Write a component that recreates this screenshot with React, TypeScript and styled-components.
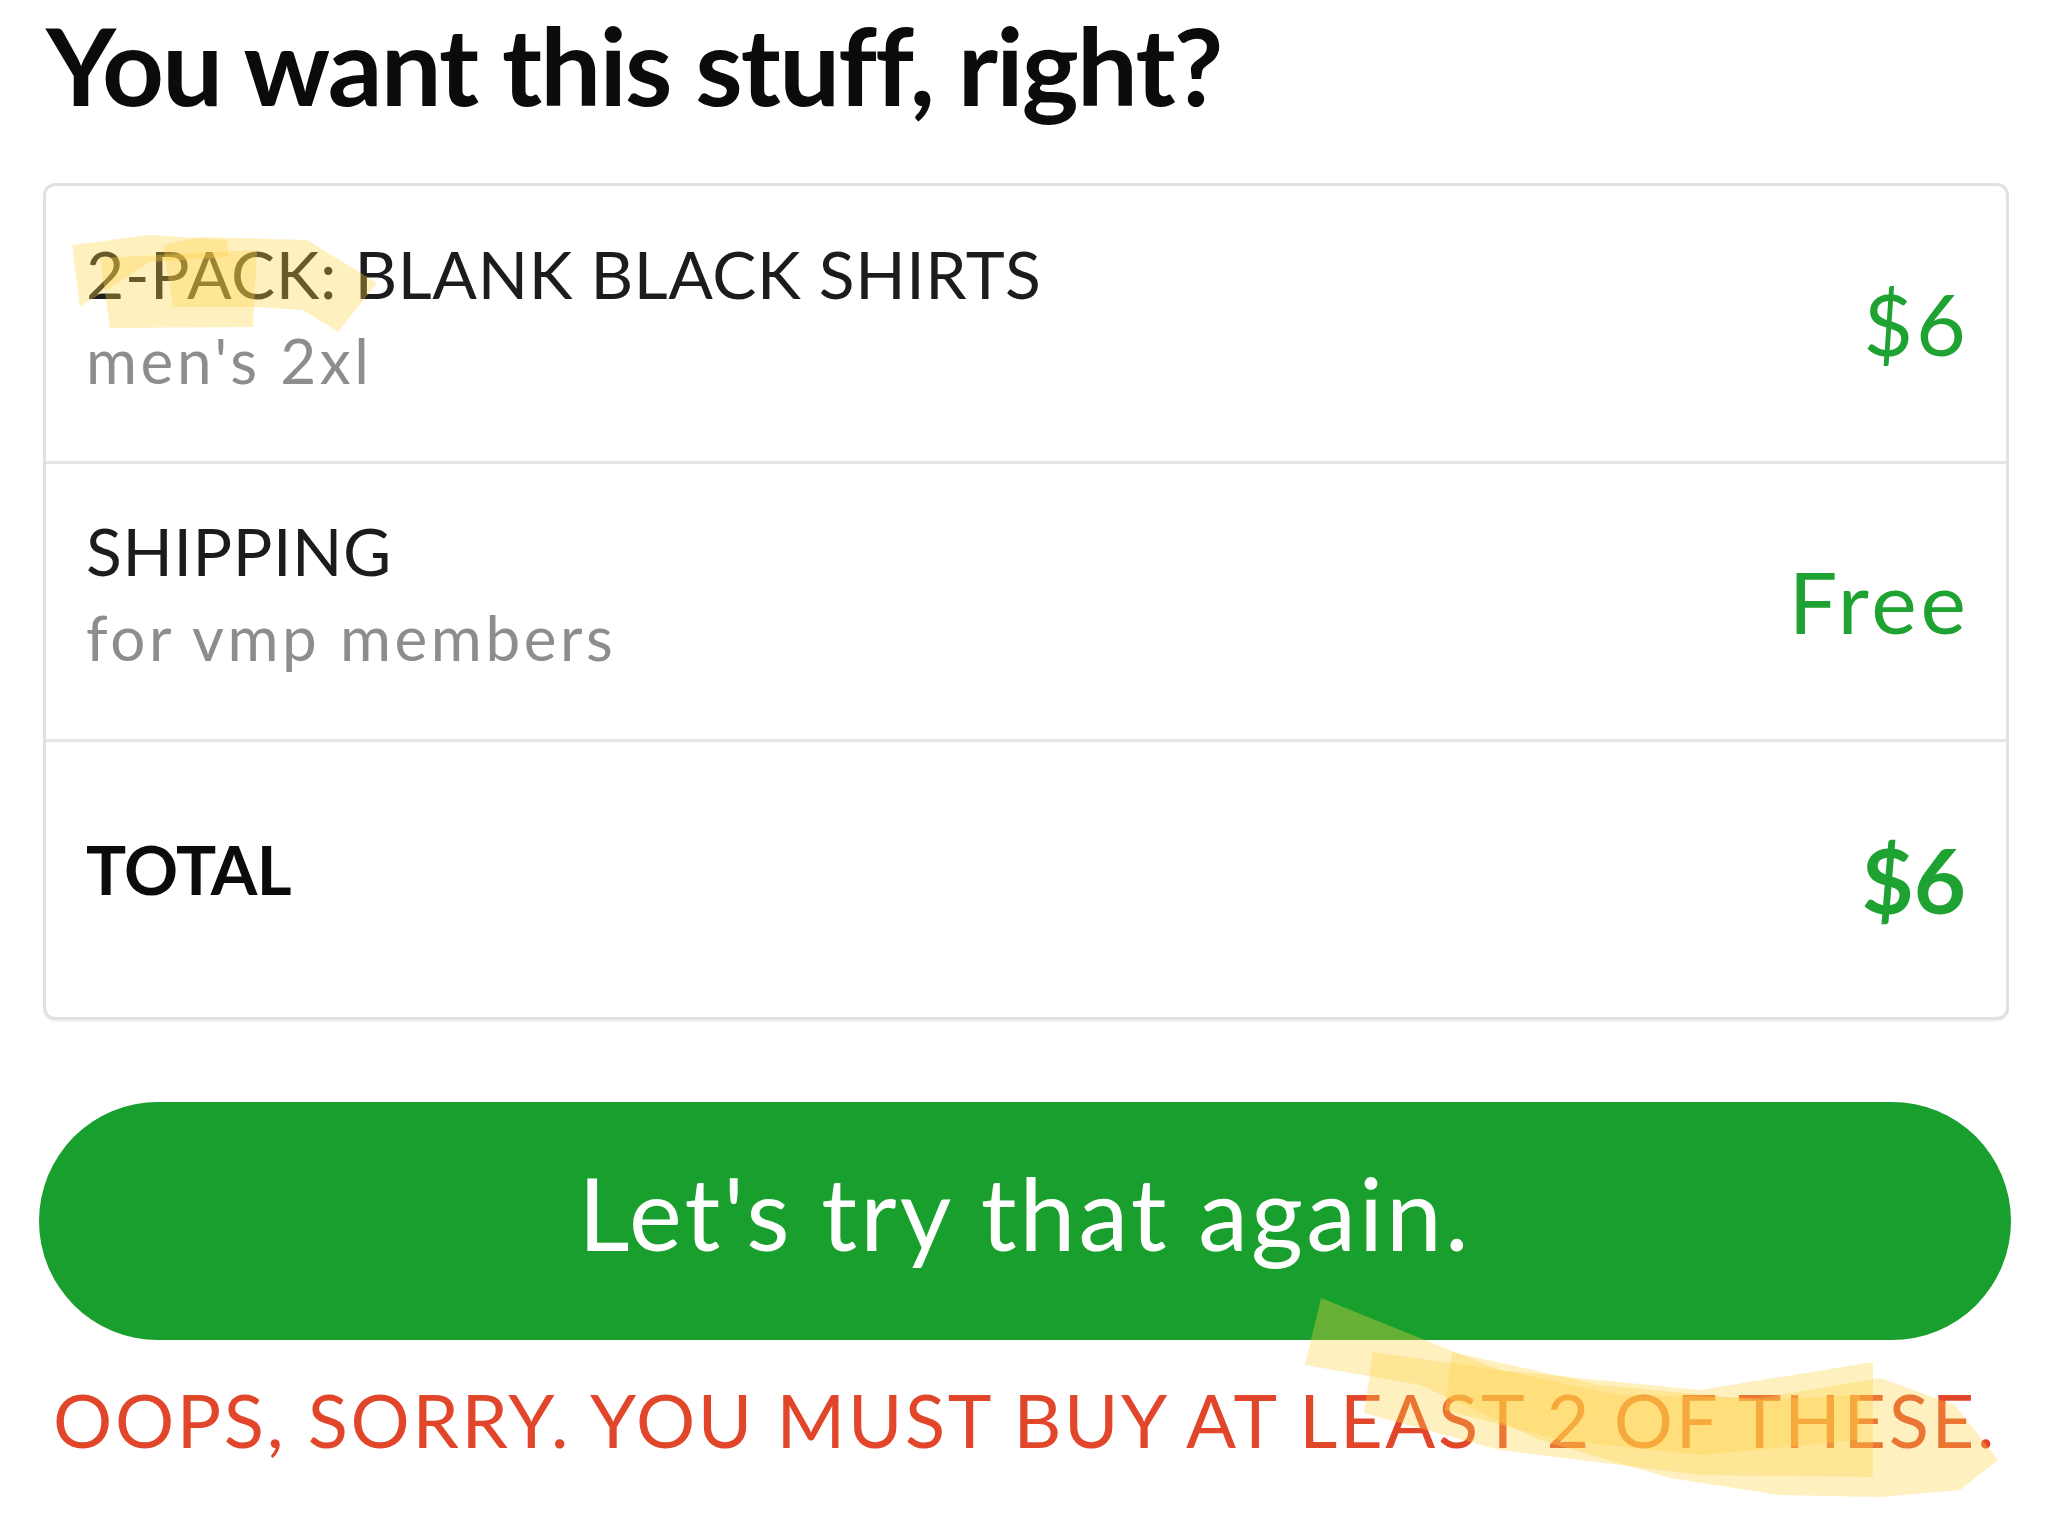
import React from "react";
import styled, { createGlobalStyle } from "styled-components";

const Global = createGlobalStyle`
  html, body { margin: 0; padding: 0; background: #ffffff; }
  body { font-family: Lato, "Noto Sans", sans-serif; }
`;

const Page = styled.main`
  position: relative;
  width: 2048px;
  min-height: 1534px;
  box-sizing: border-box;
  padding: 0 37px 0 39px;
  display: flex;
  flex-direction: column;
`;

const Title = styled.h1`
  margin: 0 0 53px 7px;
  font-family: Lato, sans-serif;
  font-weight: 700;
  font-size: 108px;
  line-height: 1.2;
  letter-spacing: -1.8px;
  color: #0b0b0b;
`;

const Card = styled.section`
  margin: 0 2px 0 4px;
  border: 3px solid #e1e1e1;
  border-radius: 12px;
  background: #fff;
  box-shadow: 0 2px 0 rgba(0, 0, 0, 0.04);
  display: flex;
  flex-direction: column;
`;

const Row = styled.div`
  height: 275px;
  padding: 0 40px 0 40px;
  display: flex;
  align-items: center;
  justify-content: space-between;
  border-bottom: 3px solid #e5e5e5;
  &:last-child { border-bottom: none; }
`;

const Info = styled.div<{ $lift: number }>`
  display: flex;
  flex-direction: column;
  margin-bottom: ${(p) => p.$lift}px;
`;

const Name = styled.div<{ $bold?: boolean }>`
  font-size: ${(p) => (p.$bold ? 67 : 66)}px;
  line-height: ${(p) => (p.$bold ? 67 : 66)}px;
  font-weight: ${(p) => (p.$bold ? 700 : 400)};
  color: ${(p) => (p.$bold ? "#0b0b0b" : "#1c1c1c")};
  letter-spacing: ${(p) => (p.$bold ? -0.6 : 0.6)}px;
  white-space: nowrap;
`;

const Sub = styled.div`
  margin-top: 20px;
  font-size: 62px;
  line-height: 66px;
  color: #8d8d8d;
  letter-spacing: 3.6px;
  white-space: nowrap;
`;

const Price = styled.div<{ $bold?: boolean; $spread: number }>`
  font-size: ${(p) => (p.$bold ? 90 : 86)}px;
  line-height: 1;
  font-weight: ${(p) => (p.$bold ? 700 : 400)};
  color: #1ea333;
  letter-spacing: ${(p) => p.$spread}px;
  margin-right: ${(p) => -p.$spread}px;
  white-space: nowrap;
`;

const Button = styled.button`
  margin-top: 82px;
  height: 238px;
  width: 100%;
  border: none;
  border-radius: 119px;
  background: #189f2d;
  color: #ffffff;
  font-family: Lato, sans-serif;
  font-size: 100px;
  line-height: 1;
  letter-spacing: 3.1px;
  padding: 0 0 18px 0;
  display: flex;
  align-items: center;
  justify-content: center;
  cursor: pointer;
`;

const ErrorText = styled.p`
  margin: 36px 0 0 0;
  text-align: center;
  font-size: 74px;
  line-height: 1.2;
  color: #e1462b;
  letter-spacing: 2.65px;
  white-space: nowrap;
`;

const Marks = styled.svg`
  position: absolute;
  left: 0;
  top: 0;
  pointer-events: none;
`;

const Mark = styled.polygon`
  fill: rgba(255, 211, 70, 0.34);
`;

const highlightPolys = [
  "72,245 150,235 227,240 228,257 150,262 80,307",
  "100,258 257,250 253,327 110,328",
  "163,245 200,237 307,240 377,283 338,332 303,310 253,307 173,307",
  "1321,1298 1400,1330 1500,1370 1620,1395 1760,1398 1880,1378 1955,1405 1998,1460 1960,1490 1880,1497 1780,1495 1670,1478 1540,1440 1420,1385 1305,1365",
  "1373,1352 1500,1370 1700,1390 1873,1362 1873,1477 1700,1475 1500,1450 1364,1413",
  "1452,1352 1600,1385 1760,1400 1860,1395 1858,1440 1700,1455 1560,1440 1445,1410",
];

type Item = { name: string; sub?: string; price: string; bold?: boolean; lift: number; spread: number };

const items: Item[] = [
  { name: "2-PACK: BLANK BLACK SHIRTS", sub: "men's 2xl", price: "$6", lift: 12, spread: 3 },
  { name: "SHIPPING", sub: "for vmp members", price: "Free", lift: 14, spread: 4 },
  { name: "TOTAL", price: "$6", bold: true, lift: 19, spread: 0 },
];

export default function App() {
  return (
    <Page>
      <Global />
      <Title>You want this stuff, right?</Title>
      <Card>
        {items.map((it) => (
          <Row key={it.name}>
            <Info $lift={it.lift}>
              <Name $bold={it.bold}>{it.name}</Name>
              {it.sub && <Sub>{it.sub}</Sub>}
            </Info>
            <Price $bold={it.bold} $spread={it.spread}>
              {it.price}
            </Price>
          </Row>
        ))}
      </Card>
      <Button type="button">Let's try that again.</Button>
      <ErrorText>OOPS, SORRY. YOU MUST BUY AT LEAST 2 OF THESE.</ErrorText>
      <Marks width="2048" height="1534" viewBox="0 0 2048 1534">
        {highlightPolys.map((pts) => (
          <Mark key={pts} points={pts} />
        ))}
      </Marks>
    </Page>
  );
}
